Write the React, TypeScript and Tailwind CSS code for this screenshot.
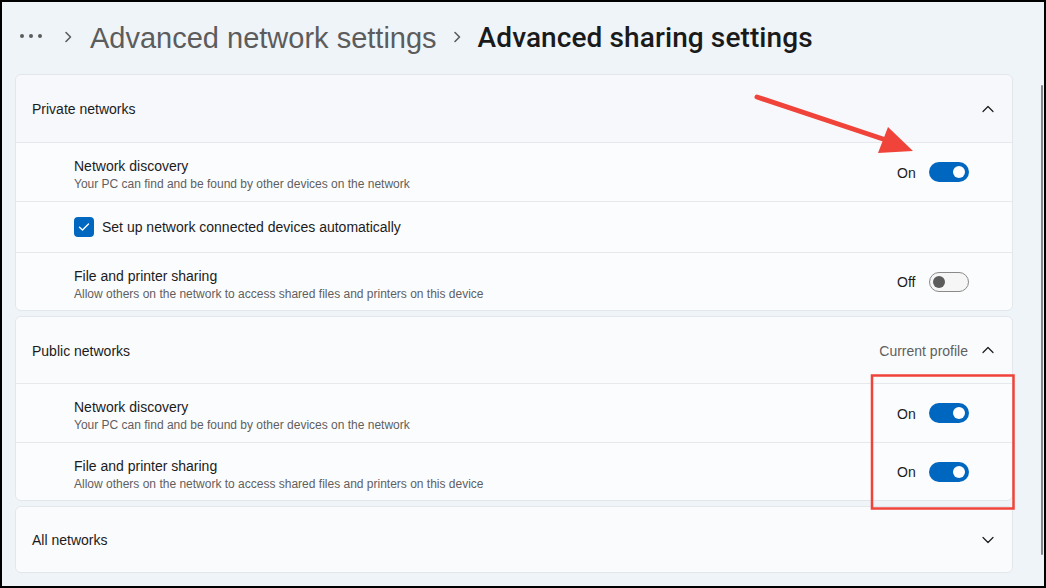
import React from "react";

function ChevronUp() {
  return (
    <svg width="12" height="8" viewBox="0 0 12 8" fill="none">
      <path d="M1 6.5 L6 1.5 L11 6.5" stroke="#1b1b1b" strokeWidth="1.2" strokeLinecap="round" strokeLinejoin="round" />
    </svg>
  );
}

function ChevronDown() {
  return (
    <svg width="12" height="8" viewBox="0 0 12 8" fill="none">
      <path d="M1 1.5 L6 6.5 L11 1.5" stroke="#1b1b1b" strokeWidth="1.2" strokeLinecap="round" strokeLinejoin="round" />
    </svg>
  );
}

function CrumbChevron() {
  return (
    <svg width="8" height="12" viewBox="0 0 8 12" fill="none">
      <path d="M2 1.5 L6.5 6 L2 10.5" stroke="#5c5c5c" strokeWidth="1.6" strokeLinecap="round" strokeLinejoin="round" />
    </svg>
  );
}

function Toggle({ on }: { on: boolean }) {
  const label = on ? "On" : "Off";
  return (
    <div className="flex items-center">
      <span className="text-[14px] text-[#1b1b1b] w-[32px] mt-[2px]">{label}</span>
      {on ? (
        <div className="w-[40px] h-[20px] rounded-full bg-[#0067c0] flex items-center justify-end pr-[4px]">
          <div className="w-[12px] h-[12px] rounded-full bg-white" />
        </div>
      ) : (
        <div className="w-[40px] h-[20px] rounded-full bg-[#f6f6f6] border border-[#8a8a8a] flex items-center pl-[3px]">
          <div className="w-[12px] h-[12px] rounded-full bg-[#5c5c5c]" />
        </div>
      )}
    </div>
  );
}

function SettingRow({ title, desc, on, h }: { title: string; desc: string; on: boolean; h: string }) {
  return (
    <div className={`${h} border-t border-[#e6e8eb] flex items-center justify-between pl-[58px] pr-[43px] bg-[#fbfcfd]`}>
      <div className="flex flex-col mt-[5px]">
        <span className="text-[14px] leading-[19px] text-[#1b1b1b]">{title}</span>
        <span className="text-[12px] leading-[16px] text-[#5f5f5f]">{desc}</span>
      </div>
      <Toggle on={on} />
    </div>
  );
}

function Header({ title, right, open, bg, h }: { title: string; right?: string; open: boolean; bg: string; h: string }) {
  return (
    <div className={`${h} flex items-center justify-between pl-[16px] pr-[18px] ${bg}`}>
      <span className="text-[14px] text-[#1b1b1b] mt-[2px]">{title}</span>
      <div className="flex items-center gap-[14px]">
        {right && <span className="text-[14px] text-[#5f5f5f] mt-[2px]">{right}</span>}
        {open ? <ChevronUp /> : <ChevronDown />}
      </div>
    </div>
  );
}

export default function App() {
  return (
    <div className="w-[1046px] h-[588px] bg-black pt-[2px] pl-[2px] pr-[2px] pb-[2px] font-['Liberation_Sans',Arial,sans-serif]">
      <div className="relative w-full h-full bg-[#eff4f9] overflow-hidden">
        {/* breadcrumb */}
        <div className="h-[72px] flex items-center pl-[18px]">
          <div className="flex items-center gap-[5px] mt-[-4px]">
            <div className="w-[4px] h-[4px] rounded-full bg-[#5c5c5c]" />
            <div className="w-[4px] h-[4px] rounded-full bg-[#5c5c5c]" />
            <div className="w-[4px] h-[4px] rounded-full bg-[#5c5c5c]" />
          </div>
          <div className="ml-[22px] mt-[-2px]">
            <CrumbChevron />
          </div>
          <span className="ml-[18px] text-[29px] text-[#5c5c5c] leading-none">Advanced network settings</span>
          <div className="ml-[16px] mt-[-2px]">
            <CrumbChevron />
          </div>
          <span className="ml-[17px] text-[28px] tracking-[0.1px] font-medium text-[#1a1a1a] leading-none font-['Roboto',sans-serif]">Advanced sharing settings</span>
        </div>

        {/* cards */}
        <div className="flex flex-col gap-[5px] pl-[13px] w-[1011px]">
          <div className="rounded-[6px] border border-[#e3e6ea] overflow-hidden">
            <Header title="Private networks" open bg="bg-[#f6f8fb]" h="h-[67px]" />
            <SettingRow title="Network discovery" desc="Your PC can find and be found by other devices on the network" on h="h-[59px]" />
            <div className="h-[51px] border-t border-[#e6e8eb] flex items-center pl-[58px] bg-[#fbfcfd]">
              <div className="w-[20px] h-[20px] rounded-[4px] bg-[#0067c0] flex items-center justify-center">
                <svg width="12" height="10" viewBox="0 0 12 10" fill="none">
                  <path d="M1.5 5.2 L4.5 8 L10.5 2" stroke="white" strokeWidth="1.4" strokeLinecap="round" strokeLinejoin="round" />
                </svg>
              </div>
              <span className="ml-[8px] text-[14px] text-[#1b1b1b] mt-[1px]">Set up network connected devices automatically</span>
            </div>
            <SettingRow title="File and printer sharing" desc="Allow others on the network to access shared files and printers on this device" on={false} h="h-[58px]" />
          </div>

          <div className="rounded-[6px] border border-[#e3e6ea] overflow-hidden">
            <Header title="Public networks" right="Current profile" open bg="bg-[#fafbfd]" h="h-[66px]" />
            <SettingRow title="Network discovery" desc="Your PC can find and be found by other devices on the network" on h="h-[59px]" />
            <SettingRow title="File and printer sharing" desc="Allow others on the network to access shared files and printers on this device" on h="h-[58px]" />
          </div>

          <div className="rounded-[6px] border border-[#e3e6ea] overflow-hidden">
            <Header title="All networks" open={false} bg="bg-[#fafbfd]" h="h-[65px]" />
          </div>
        </div>

        {/* scrollbar */}
        <div className="absolute left-[1039px] top-[83px] w-[2px] h-[470px] rounded-full bg-[#868686]" />
      </div>

      {/* annotations overlay */}
      <svg className="absolute left-0 top-0 pointer-events-none" width="1046" height="588" viewBox="0 0 1046 588">
        <line x1="757" y1="97" x2="892" y2="142" stroke="#f0443a" strokeWidth="5" strokeLinecap="round" />
        <polygon points="913,151 888,127 878,153" fill="#f0443a" />
        <rect x="872" y="375.5" width="141.5" height="133" fill="none" stroke="#f0443a" strokeWidth="2.5" />
      </svg>
    </div>
  );
}
